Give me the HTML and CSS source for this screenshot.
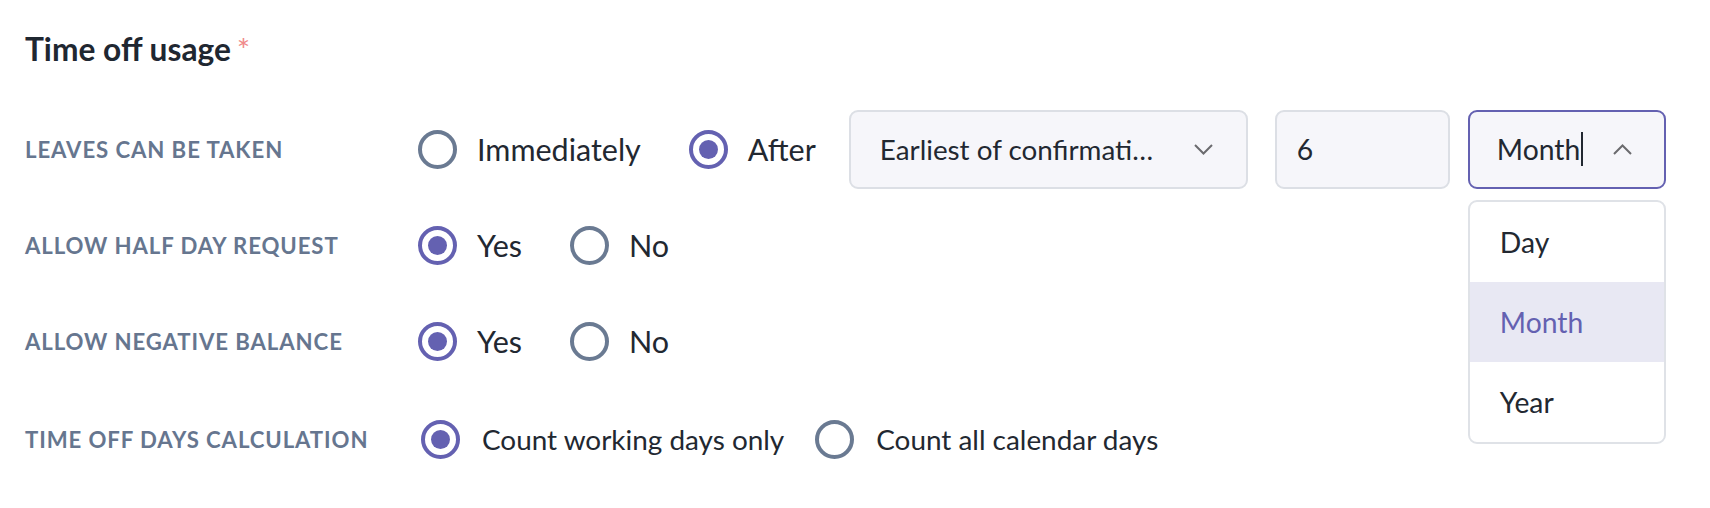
FILE: index.html
```html
<!DOCTYPE html>
<html lang="en">
<head>
<meta charset="utf-8">
<title>Time off usage</title>
<link rel="stylesheet" href="styles.css">
</head>
<body>
<div class="page">
  <h2 class="title">Time off usage<span class="req">*</span></h2>
  <div class="rows">
    <div class="row">
      <div class="label">LEAVES CAN BE TAKEN</div>
      <div class="controls">
        <div class="radio"><span class="circle"></span><span class="rtext">Immediately</span></div>
        <div class="radio"><span class="circle on"></span><span class="rtext">After</span></div>
        <div class="select wide">
          <span class="value">Earliest of confirmati…</span>
          <svg class="chev" width="19" height="11" viewBox="0 0 19 11"><polyline points="1,1 9.5,9.5 18,1" fill="none" stroke="#6b6b6e" stroke-width="2"/></svg>
        </div>
        <div class="select num"><span class="value">6</span></div>
        <div class="select unit focus">
          <span class="value">Month<span class="caret"></span></span>
          <svg class="chev" width="19" height="11" viewBox="0 0 19 11"><polyline points="1,10 9.5,1.5 18,10" fill="none" stroke="#6b6b6e" stroke-width="2"/></svg>
          <ul class="menu">
            <li class="item">Day</li>
            <li class="item active">Month</li>
            <li class="item">Year</li>
          </ul>
        </div>
      </div>
    </div>
    <div class="row">
      <div class="label">ALLOW HALF DAY REQUEST</div>
      <div class="controls">
        <div class="radio"><span class="circle on"></span><span class="rtext">Yes</span></div>
        <div class="radio"><span class="circle"></span><span class="rtext">No</span></div>
      </div>
    </div>
    <div class="row">
      <div class="label">ALLOW NEGATIVE BALANCE</div>
      <div class="controls">
        <div class="radio"><span class="circle on"></span><span class="rtext">Yes</span></div>
        <div class="radio"><span class="circle"></span><span class="rtext">No</span></div>
      </div>
    </div>
    <div class="row last">
      <div class="label">TIME OFF DAYS CALCULATION</div>
      <div class="controls small">
        <div class="radio"><span class="circle on"></span><span class="rtext">Count working days only</span></div>
        <div class="radio"><span class="circle"></span><span class="rtext">Count all calendar days</span></div>
      </div>
    </div>
  </div>
</div>
</body>
</html>
```
FILE: styles.css
```css
* { box-sizing: border-box; }
html, body { margin: 0; padding: 0; background: #ffffff; }
body {
  font-family: Lato, "Open Sans", "Liberation Sans", sans-serif;
  color: #222831;
  width: 1710px;
  height: 508px;
  overflow: hidden;
}
.page {
  padding: 29px 0 0 25px;
}
.title {
  margin: 0;
  font-size: 31.7px;
  font-weight: 700;
  line-height: 40px;
  color: #1f2731;
}
.req {
  color: #f08a8a;
  font-weight: 400;
  margin-left: 6px;
}
.rows {
  margin-top: 32px;
  display: flex;
  flex-direction: column;
}
.row {
  display: grid;
  grid-template-columns: 393px 1fr;
  align-items: center;
  min-height: 96px;
}
.row.last { padding-top: 4px; }
.label {
  font-size: 22.2px;
  font-weight: 700;
  color: #66768f;
  letter-spacing: 0.9px;
}
.controls {
  display: flex;
  align-items: center;
  font-size: 30.5px;
}
.radio {
  display: flex;
  align-items: center;
  gap: 20px;
}
.radio + .radio { margin-left: 48px; }
.circle {
  width: 39px;
  height: 39px;
  border-radius: 50%;
  border: 4px solid #6a7a92;
  background: #fff;
  display: flex;
  align-items: center;
  justify-content: center;
  flex: none;
}
.circle.on { border-color: #6461b1; }
.circle.on::after {
  content: "";
  width: 19px;
  height: 19px;
  border-radius: 50%;
  background: #6461b1;
}
.controls.small { font-size: 27.9px; margin-left: 3px; }
.controls.small .radio { gap: 22px; }
.controls.small .radio + .radio { margin-left: 31px; }
.select {
  position: relative;
  height: 79px;
  border: 2px solid #dcdfe5;
  border-radius: 9px;
  background: #f6f6fa;
  display: flex;
  align-items: center;
  justify-content: space-between;
  font-size: 28.3px;
}
.select.wide {
  width: 399px;
  margin-left: 33px;
  padding: 0 33px 0 29px;
  font-size: 27.8px;
}
.select.num {
  width: 175px;
  margin-left: 27px;
  padding: 0 20px;
}
.select.unit {
  width: 198px;
  margin-left: 18px;
  padding: 0 32px 0 27px;
  border-color: #6461b1;
}
.value { white-space: nowrap; display: flex; align-items: center; }
.caret {
  display: inline-block;
  width: 2px;
  height: 34px;
  background: #222831;
  margin-left: 1px;
}
.chev { display: block; flex: none; }
.menu {
  position: absolute;
  top: 88px;
  left: -2px;
  width: 198px;
  margin: 0;
  padding: 0;
  list-style: none;
  background: #ffffff;
  border: 2px solid #dfe2e7;
  border-radius: 9px;
  overflow: hidden;
}
.item {
  height: 80px;
  display: flex;
  align-items: center;
  padding-left: 30px;
  color: #222831;
}
.item.active {
  background: #e8e8f3;
  color: #6461b1;
}
```
